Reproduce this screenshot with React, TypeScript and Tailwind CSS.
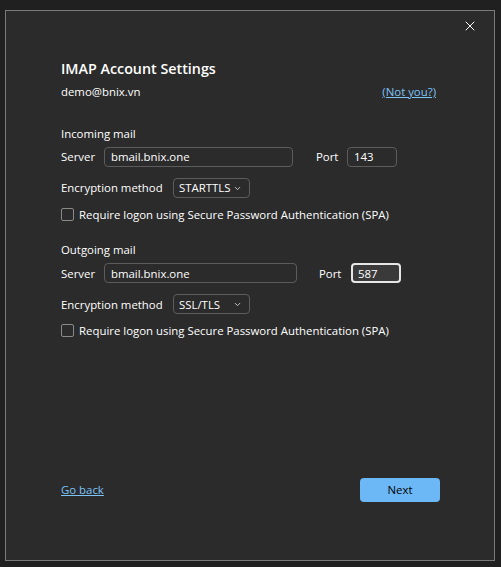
import { X, ChevronDown } from 'lucide-react';

function TextBox({ value, width, focused }: { value: string; width: string; focused?: boolean }) {
  return (
    <div
      className={
        focused
          ? `${width} h-[20px] rounded-[4px] border-2 border-[#e6e6e6] bg-[#3a3a3a] px-[5px] flex items-center text-[11.4px] text-white`
          : `${width} h-[20px] rounded-[4px] border border-[#5c5c5c] bg-[#2b2b2b] px-[6px] flex items-center text-[11.4px] text-white`
      }
    >
      {value}
    </div>
  );
}

function Dropdown({ value }: { value: string }) {
  return (
    <div className="w-[77px] h-[20px] rounded-[4px] border border-[#5c5c5c] flex items-center justify-between pl-[5px] pr-[7px] text-[11.4px] text-white">
      <span>{value}</span>
      <ChevronDown size={9} strokeWidth={2.5} className="text-[#cfcfcf]" />
    </div>
  );
}

function Checkbox({ label }: { label: string }) {
  return (
    <div className="flex items-center gap-[5px] text-[11.4px] text-white">
      <div className="w-[13px] h-[13px] rounded-[2px] border border-[#8a8a8a]" />
      <span>{label}</span>
    </div>
  );
}

function MailSection({ title, portWidth, serverWidth, port, method, focused }: any) {
  return (
    <div className="flex flex-col">
      <div className="text-[11.4px] text-white leading-[16px]">{title}</div>
      <div className="flex items-center mt-[5px] h-[20px]">
        <span className="w-[43px] text-[11.4px] text-white">Server</span>
        <TextBox value="bmail.bnix.one" width={serverWidth} />
        <span className={`text-[11.4px] text-white ${portWidth}`}>Port</span>
        <TextBox value={port} width="w-[50px]" focused={focused} />
      </div>
      <div className="flex items-center mt-[11px] h-[20px]">
        <span className="w-[112px] text-[11.4px] text-white">Encryption method</span>
        <Dropdown value={method} />
      </div>
      <div className="mt-[8px]">
        <Checkbox label="Require logon using Secure Password Authentication (SPA)" />
      </div>
    </div>
  );
}

export default function App() {
  return (
    <div
      className="w-[501px] h-[567px] bg-[#202020] pt-[10px] pl-[5px]"
      style={{ fontFamily: '"Open Sans", "Noto Sans", sans-serif' }}
    >
      <div className="w-[490px] h-[551px] border border-[#7a7a7a] bg-[#2b2b2b] relative flex flex-col px-[55px]">
        <button className="absolute top-[7px] right-[16px] text-white">
          <X size={16} strokeWidth={1.5} />
        </button>
        <h1 className="mt-[48px] text-[14.3px] font-semibold text-white leading-[20px]">IMAP Account Settings</h1>
        <div className="flex justify-between items-center mt-[5px] text-[11.4px] leading-[16px]">
          <span className="text-white">demo@bnix.vn</span>
          <a className="text-[#7cc4f8] underline mr-[3px]">(Not you?)</a>
        </div>

        <div className="mt-[26px]">
          <MailSection title="Incoming mail" serverWidth="w-[189px]" portWidth="w-[54px] pl-[23px]" port="143" method="STARTTLS" />
        </div>
        <div className="mt-[19px]">
          <MailSection title="Outgoing mail" serverWidth="w-[193px]" portWidth="w-[54px] pl-[22px]" port="587" method="SSL/TLS" focused />
        </div>

        <div className="mt-auto mb-[58px] flex items-center justify-between">
          <a className="text-[11.4px] text-[#7cc4f8] underline">Go back</a>
          <button className="w-[80px] h-[24px] rounded-[4px] bg-[#6cb8f6] text-[11.4px] text-black mr-[-1px]">Next</button>
        </div>
      </div>
    </div>
  );
}
